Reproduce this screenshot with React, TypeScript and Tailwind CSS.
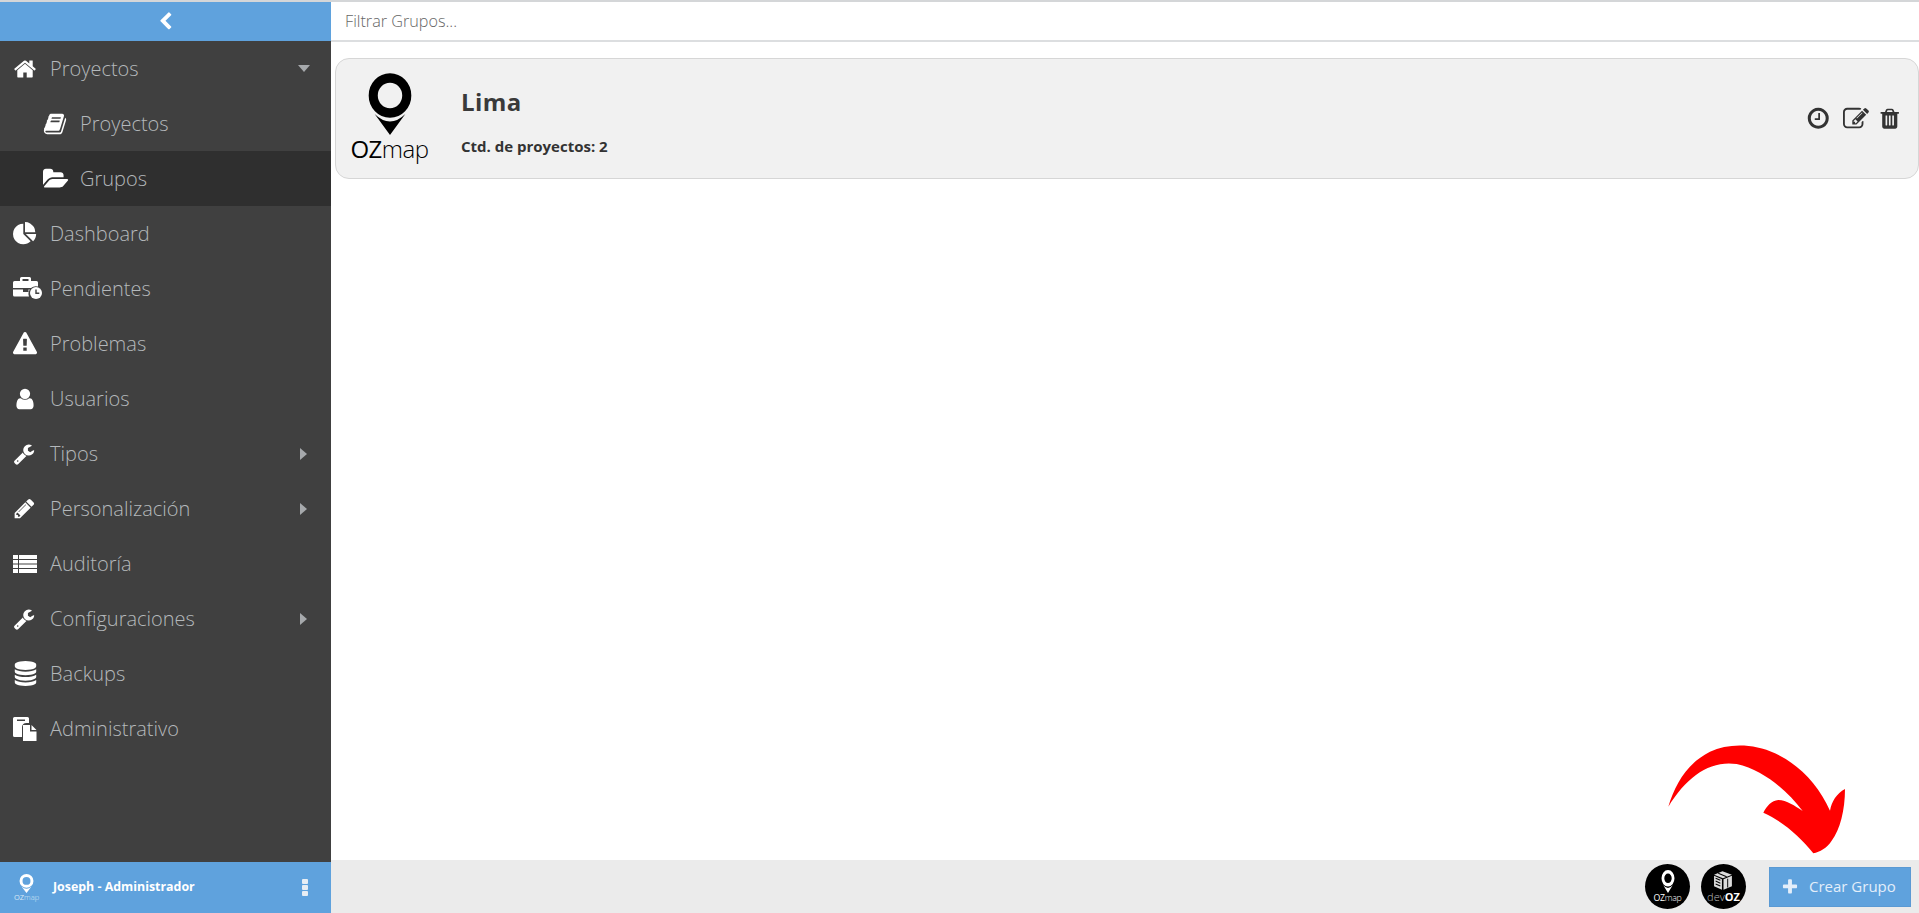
import { ReactNode } from "react";

const FA = ({ d, w = 1792, size = 24, className = "" }: { d: string; w?: number; size?: number; className?: string }) => (
  <svg viewBox={`0 0 ${w} 1792`} width={(size * w) / 1792} height={size} className={className} fill="currentColor">
    <path d={d} />
  </svg>
);

const paths = {
  home: "M1472 992v480q0 26-19 45t-45 19h-384v-384h-256v384h-384q-26 0-45-19t-19-45v-480q0-1 .5-3t.5-3l575-474 575 474q1 2 1 6zm223-69l-62 74q-8 9-21 11h-3q-13 0-21-7l-692-577-692 577q-12 8-24 7-13-2-21-11l-62-74q-8-10-7-23.5t11-21.5l719-599q32-26 76-26t76 26l244 204v-195q0-14 9-23t23-9h192q14 0 23 9t9 23v408l219 182q10 8 11 21.5t-7 23.5z",
  book: "M1703 478q40 57 18 129l-275 906q-19 64-76.5 107.5t-122.5 43.5h-923q-77 0-148.5-53.5t-99.5-131.5q-24-67-2-127 0-4 3-27t4-37q1-8-3-21.5t-3-19.5q2-11 8-21t16.5-23.5 16.5-23.5q23-38 45-91.5t30-91.5q3-10 .5-30t-.5-28q3-11 17-28t17-23q21-36 42-92t25-90q1-9-2.5-32t.5-28q4-13 22-30.5t22-22.5q19-26 42.5-84.5t27.5-96.5q1-8-3-25.5t-2-26.5q2-8 9-18t18-23 17-21q8-12 16.5-30.5t15-35 16-36 19.5-32 26.5-23.5 36-11.5 47.5 5.5l-1 3q38-9 51-9h761q74 0 114 56t18 130l-274 906q-36 119-71.5 153.5t-128.5 34.5h-869q-27 0-38 15-11 16-1 43 24 70 144 70h923q29 0 56-15.5t35-41.5l300-987q7-22 5-57 38 15 59 43zm-1064 2q-4 13 2 22.5t20 9.5h608q13 0 25.5-9.5t16.5-22.5l21-64q4-13-2-22.5t-20-9.5h-608q-13 0-25.5 9.5t-16.5 22.5zm-83 256q-4 13 2 22.5t20 9.5h608q13 0 25.5-9.5t16.5-22.5l21-64q4-13-2-22.5t-20-9.5h-608q-13 0-25.5 9.5t-16.5 22.5z",
  folder: "M1879 952q0 31-31 66l-336 396q-43 51-120.5 86.5t-143.5 35.5h-1088q-34 0-60.5-13t-26.5-43q0-31 31-66l336-396q43-51 120.5-86.5t143.5-35.5h1088q34 0 60.5 13t26.5 43zm-343-344v160h-832q-94 0-197 47.5t-164 119.5l-337 396-5 6q0-4-.5-12.5t-.5-12.5v-960q0-92 66-158t158-66h320q92 0 158 66t66 158v32h544q92 0 158 66t66 158z",
  pie: "M768 890l546 546q-106 108-247.5 168t-298.5 60q-209 0-385.5-103t-279.5-279.5-103-385.5 103-385.5 279.5-279.5 385.5-103v762zm187 6h773q0 157-60 298.5t-168 247.5zm709-128h-768v-768q209 0 385.5 103t279.5 279.5 103 385.5z",
  warning: "M1024 1375v-190q0-14-9.5-23.5t-22.5-9.5h-192q-13 0-22.5 9.5t-9.5 23.5v190q0 14 9.5 23.5t22.5 9.5h192q13 0 22.5-9.5t9.5-23.5zm-2-374l18-459q0-12-10-19-13-11-24-11h-220q-11 0-24 11-10 7-10 21l17 457q0 10 10 16.5t24 6.5h185q14 0 23.5-6.5t10.5-16.5zm-14-934l768 1408q35 63-2 126-17 29-46.5 46t-63.5 17h-1536q-34 0-63.5-17t-46.5-46q-37-63-2-126l768-1408q17-31 47-49t65-18 65 18 47 49z",
  user: "M1536 1399q0 109-62.5 187t-150.5 78h-854q-88 0-150.5-78t-62.5-187q0-85 8.5-160.5t31.5-152 58.5-131 94-89 134.5-34.5q131 128 313 128t313-128q76 0 134.5 34.5t94 89 58.5 131 31.5 152 8.5 160.5zm-256-887q0 159-112.5 271.5t-271.5 112.5-271.5-112.5-112.5-271.5 112.5-271.5 271.5-112.5 271.5 112.5 112.5 271.5z",
  wrench: "M448 1472q0-26-19-45t-45-19-45 19-19 45 19 45 45 19 45-19 19-45zm644-420l-682 682q-37 37-90 37-52 0-91-37l-106-108q-38-36-38-90 0-53 38-91l681-681q39 98 114.5 173.5t173.5 114.5zm634-435q0 39-23 106-47 134-164.5 217.5t-258.5 83.5q-185 0-316.5-131.5t-131.5-316.5 131.5-316.5 316.5-131.5q58 0 121.5 16.5t107.5 46.5q16 11 16 28t-16 28l-293 169v224l193 107q5-3 79-48.5t135.5-81 70.5-35.5q15 0 23.5 10t8.5 25z",
  pencil: "M491 1536l91-91-235-235-91 91v107h128v128h107zm523-928q0-22-22-22-10 0-17 7l-542 542q-7 7-7 17 0 22 22 22 10 0 17-7l542-542q7-7 7-17zm-54-192l416 416-832 832h-416v-416zm683 96q0 53-37 90l-166 166-416-416 166-165q36-38 90-38 53 0 91 38l235 234q37 39 37 91z",
  database: "M896 768q237 0 443-43t325-127v170q0 69-103 128t-280 93.5-385 34.5-385-34.5-280-93.5-103-128v-170q119 84 325 127t443 43zm0 768q237 0 443-43t325-127v170q0 69-103 128t-280 93.5-385 34.5-385-34.5-280-93.5-103-128v-170q119 84 325 127t443 43zm0-384q237 0 443-43t325-127v170q0 69-103 128t-280 93.5-385 34.5-385-34.5-280-93.5-103-128v-170q119 84 325 127t443 43zm0-1152q208 0 385 34.5t280 93.5 103 128v128q0 69-103 128t-280 93.5-385 34.5-385-34.5-280-93.5-103-128v-128q0-69 103-128t280-93.5 385-34.5z",
  trash: "M704 1376v-704q0-14-9-23t-23-9h-64q-14 0-23 9t-9 23v704q0 14 9 23t23 9h64q14 0 23-9t9-23zm256 0v-704q0-14-9-23t-23-9h-64q-14 0-23 9t-9 23v704q0 14 9 23t23 9h64q14 0 23-9t9-23zm256 0v-704q0-14-9-23t-23-9h-64q-14 0-23 9t-9 23v704q0 14 9 23t23 9h64q14 0 23-9t9-23zm-544-992h448l-48-117q-7-9-17-11h-317q-10 2-17 11zm928 32v64q0 14-9 23t-23 9h-96v948q0 83-47 143.5t-113 60.5h-832q-66 0-113-58.5t-47-141.5v-952h-96q-14 0-23-9t-9-23v-64q0-14 9-23t23-9h309l70-167q15-37 54-63t79-26h320q40 0 79 26t54 63l70 167h309q14 0 23 9t9 23z",
  clock: "M1024 544v448q0 14-9 23t-23 9h-320q-14 0-23-9t-9-23v-64q0-14 9-23t23-9h224v-352q0-14 9-23t23-9h64q14 0 23 9t9 23zm416 352q0-148-73-273t-198-198-273-73-273 73-198 198-73 273 73 273 198 198 273 73 273-73 198-198 73-273zm224 0q0 209-103 385.5t-279.5 279.5-385.5 103-385.5-103-279.5-279.5-103-385.5 103-385.5 279.5-279.5 385.5-103 385.5 103 279.5 279.5 103 385.5z",
  edit: "M888 1184l116-116-152-152-116 116v56h96v96h56zm440-720q-16-16-33 1l-350 350q-17 17-1 33t33-1l350-350q17-17 1-33zm80 594v190q0 119-84.5 203.5t-203.5 84.5h-832q-119 0-203.5-84.5t-84.5-203.5v-832q0-119 84.5-203.5t203.5-84.5h832q63 0 117 25 15 7 18 23 3 17-9 29l-49 49q-14 14-32 8-23-6-45-6h-832q-66 0-113 47t-47 113v832q0 66 47 113t113 47h832q66 0 113-47t47-113v-126q0-13 9-22l64-64q15-15 35-7t20 29zm-96-738l288 288-672 672h-288v-288zm444 132l-92 92-288-288 92-92q28-28 68-28t68 28l152 152q28 28 28 68t-28 68z",
  plus: "M1600 736v192q0 40-28 68t-68 28h-416v416q0 40-28 68t-68 28h-192q-40 0-68-28t-28-68v-416h-416q-40 0-68-28t-28-68v-192q0-40 28-68t68-28h416v-416q0-40 28-68t68-28h192q40 0 68 28t28 68v416h416q40 0 68 28t28 68z",
  chevron: "M1427 301l-531 531 531 531q19 19 19 45t-19 45l-166 166q-19 19-45 19t-45-19l-742-742q-19-19-19-45t19-45l742-742q19-19 45-19t45 19l166 166q19 19 19 45t-19 45z",
};

const Briefcase = () => (
  <svg viewBox="0 2 29 22" width="29" height="22" fill="currentColor" className="mb-[2px]">
    <path d="M0 7.500a1.500 1.500 0 0 1 1.500-1.500H7V3.500A1.500 1.500 0 0 1 8.500 2h8A1.500 1.500 0 0 1 18 3.500V6h5.500A1.500 1.500 0 0 1 25 7.500V11.500a7.500 7.500 0 0 0-7 1.500H0zM9.500 4v2h6V4z" />
    <path d="M0 14.500h10v2.500h5.500v-2.500h1.300a7.500 7.500 0 0 0-.8 7H1.500A1.500 1.500 0 0 1 0 20z" />
    <circle cx="23" cy="18" r="6" />
    <path d="M22.300 14.500h1.400v3.100h2.600v1.400h-4z" fill="#404040" />
  </svg>
);

const ListIcon = () => (
  <svg viewBox="0 0 24 20" width="24" height="20" fill="currentColor">
    <path d="M0 1h5v4H0zM6 1h18v4H6zM0 6h5v3.500H0zM6 6h18v3.500H6zM0 10.500h5V14H0zM6 10.500h18V14H6zM0 15h5v4H0zM6 15h18v4H6z" />
  </svg>
);

const PasteIcon = () => (
  <svg viewBox="0 0 24 24" width="24" height="24" fill="currentColor">
    <path d="M1.500 0h13A1.500 1.500 0 0 1 16 1.500V6h-2.500a4.500 4.500 0 0 0-4.500 4V20H1.500A1.500 1.500 0 0 1 0 18.500v-17A1.500 1.500 0 0 1 1.500 0zM4 2.500V4h8V2.500z" />
    <path d="M10 8h7v6.500h6.500V24H10zM18.500 8l5 5h-5z" />
  </svg>
);

const Pin = ({ color, className = "" }: { color: string; className?: string }) => (
  <svg viewBox="0 0 48 62" preserveAspectRatio="none" className={className}>
    <circle cx="24" cy="22.500" r="17.500" fill="none" stroke={color} strokeWidth="9.500" />
    <path d="M8 41 Q24 56 40 41 L24 62 Z" fill={color} />
  </svg>
);

const MenuItem = ({ icon, label, sub, active, caret }: { icon: ReactNode; label: string; sub?: boolean; active?: boolean; caret?: "down" | "right" }) => (
  <div className={`flex h-[55px] items-center ${sub ? "pl-[43px]" : "pl-[13px]"} pr-[21px] ${active ? "bg-[#2f2f2f]" : ""}`}>
    <span className="flex w-[37px] shrink-0 items-center text-white">{icon}</span>
    <span className="flex-1 text-[20px] font-light leading-none text-[#b4b8bb]">{label}</span>
    {caret === "down" && <span className="h-0 w-0 border-x-[6px] border-t-[7px] border-x-transparent border-t-[#a6a9ac]" />}
    {caret === "right" && <span className="mr-[3px] h-0 w-0 border-y-[6px] border-l-[7px] border-y-transparent border-l-[#a6a9ac]" />}
  </div>
);

export default function App() {
  return (
    <div className="relative flex h-screen w-full flex-col overflow-hidden bg-white font-['Open_Sans',sans-serif]">
      <div className="h-[2px] shrink-0 bg-[#d4d6d8]" />
      <div className="flex min-h-0 flex-1">
        {/* sidebar */}
        <aside className="flex w-[331px] shrink-0 flex-col bg-[#404040]">
          <div className="flex h-[39px] shrink-0 items-center justify-center bg-[#5fa2dd] text-white">
            <FA d={paths.chevron} size={19} />
          </div>
          <nav className="flex-1">
            <MenuItem icon={<FA d={paths.home} size={24} />} label="Proyectos" caret="down" />
            <MenuItem sub icon={<FA d={paths.book} size={24} />} label="Proyectos" />
            <MenuItem sub active icon={<FA d={paths.folder} w={1920} size={24} />} label="Grupos" />
            <MenuItem icon={<FA d={paths.pie} size={24} />} label="Dashboard" />
            <MenuItem icon={<Briefcase />} label="Pendientes" />
            <MenuItem icon={<FA d={paths.warning} size={24} />} label="Problemas" />
            <MenuItem icon={<FA d={paths.user} size={24} />} label="Usuarios" />
            <MenuItem icon={<FA d={paths.wrench} size={22} />} label="Tipos" caret="right" />
            <MenuItem icon={<FA d={paths.pencil} size={23} />} label="Personalización" caret="right" />
            <MenuItem icon={<ListIcon />} label="Auditoría" />
            <MenuItem icon={<FA d={paths.wrench} size={22} />} label="Configuraciones" caret="right" />
            <MenuItem icon={<FA d={paths.database} size={25} />} label="Backups" />
            <MenuItem icon={<PasteIcon />} label="Administrativo" />
          </nav>
          <div className="flex h-[51px] shrink-0 items-center bg-[#5fa2dd] pl-[14px] pr-[21px] text-white">
            <div className="flex w-[39px] flex-col items-center">
              <Pin color="#ffffff" className="ml-[-14px] h-[19px] w-[15px]" />
              <span className="ml-[-14px] text-[7.500px] leading-[9px] text-[#d8e8f6]">OZ<span className="font-light">map</span></span>
            </div>
            <span className="flex-1 text-[12.400px] font-bold">Joseph - Administrador</span>
            <span className="flex flex-col gap-[1.500px] pr-[2px]">
              <i className="block h-[4.500px] w-[6px] rounded-[1px] bg-[#e8eef4]" />
              <i className="block h-[4.500px] w-[6px] rounded-[1px] bg-[#e8eef4]" />
              <i className="block h-[4.500px] w-[6px] rounded-[1px] bg-[#e8eef4]" />
            </span>
          </div>
        </aside>

        {/* main */}
        <main className="flex min-w-0 flex-1 flex-col">
          <input
            placeholder="Filtrar Grupos..."
            className="h-[40px] shrink-0 border-b-2 border-[#dcdee0] bg-white pl-[14px] text-[16.200px] font-light text-[#555] outline-none placeholder:text-[#666]"
          />
          <div className="flex-1 pl-[4px] pt-[16px]">
            <div className="flex h-[121px] items-center rounded-[14px] border border-[#d6d6d6] bg-[#f1f1f1]">
              <div className="mr-[18px] flex w-[107px] shrink-0 flex-col items-center">
                <Pin color="#000000" className="h-[62px] w-[46px]" />
                <span className="mt-[-1px] text-[24px] font-[450] leading-[30px] tracking-[-0.5px] text-black">OZ<span className="font-light">map</span></span>
              </div>
              <div className="flex-1 pt-[5px] text-[#333]">
                <div className="text-[24px] font-bold leading-[30px] tracking-[0.4px] text-[#3a3a3a]">Lima</div>
                <div className="mt-[19px] text-[15px] font-bold leading-[20px]">Ctd. de proyectos: 2</div>
              </div>
              <div className="flex items-center pr-[17px] text-[#333]">
                <FA d={paths.clock} size={24.500} className="mr-[12px]" />
                <FA d={paths.edit} size={26} className="mr-[9px]" />
                <FA d={paths.trash} size={23.500} />
              </div>
            </div>
          </div>
          <div className="flex h-[53px] shrink-0 items-center justify-end bg-[#ebebeb] pr-[8px]">
            <div className="mr-[11px] flex h-[45px] w-[45px] flex-col items-center justify-center rounded-full bg-black text-white">
              <Pin color="#ffffff" className="h-[23px] w-[14px]" />
              <span className="text-[8.800px] leading-[11px] tracking-[-0.3px]">OZ<span className="font-light">map</span></span>
            </div>
            <div className="mr-[23px] flex h-[45px] w-[45px] flex-col items-center justify-center rounded-full bg-black text-white">
              <svg viewBox="0 0 20 18" width="21" height="21" fill="#dcdcdc" preserveAspectRatio="none">
                <path d="M1 4l8-3 9 3-8.500 3zM1 5l7.500 3v9L1 14zM10 8l8-3v9l-8 3z" />
                <path d="M2.500 7l4.500 1.800M2.500 9.500l4.500 1.800M2.500 12l4.500 1.800M14 7.500v7.500M5 2.800l8 3" stroke="#000" strokeWidth="0.900" />
              </svg>
              <span className="text-[11px] leading-[12px]"><span className="font-light text-[#bbb]">dev</span><span className="font-bold">OZ</span></span>
            </div>
            <button className="flex h-[40px] w-[142px] items-center border border-[#5a9ad4] bg-[#5fa2dd] pl-[11px] text-[15px] text-[#e3eefa]">
              <FA d={paths.plus} size={18} className="mr-[10px]" />
              Crear Grupo
            </button>
          </div>
        </main>
      </div>
      {/* red annotation arrow drawn over the screenshot */}
      <svg viewBox="0 0 957 579" className="pointer-events-none absolute bottom-0 right-0 h-[193px] w-[319px]">
        <path
          fill="#ff0000"
          d="M205 260 C225 195 260 130 330 95 C385 70 460 70 525 100 C600 135 655 195 690 272 C695 245 710 220 735 207 C735 270 720 330 695 362 C680 385 660 395 640 400 C600 350 550 305 490 278 C500 258 515 242 535 240 C560 240 585 258 608 273 C560 210 490 150 410 132 C330 120 260 170 205 260 Z"
        />
      </svg>
    </div>
  );
}
